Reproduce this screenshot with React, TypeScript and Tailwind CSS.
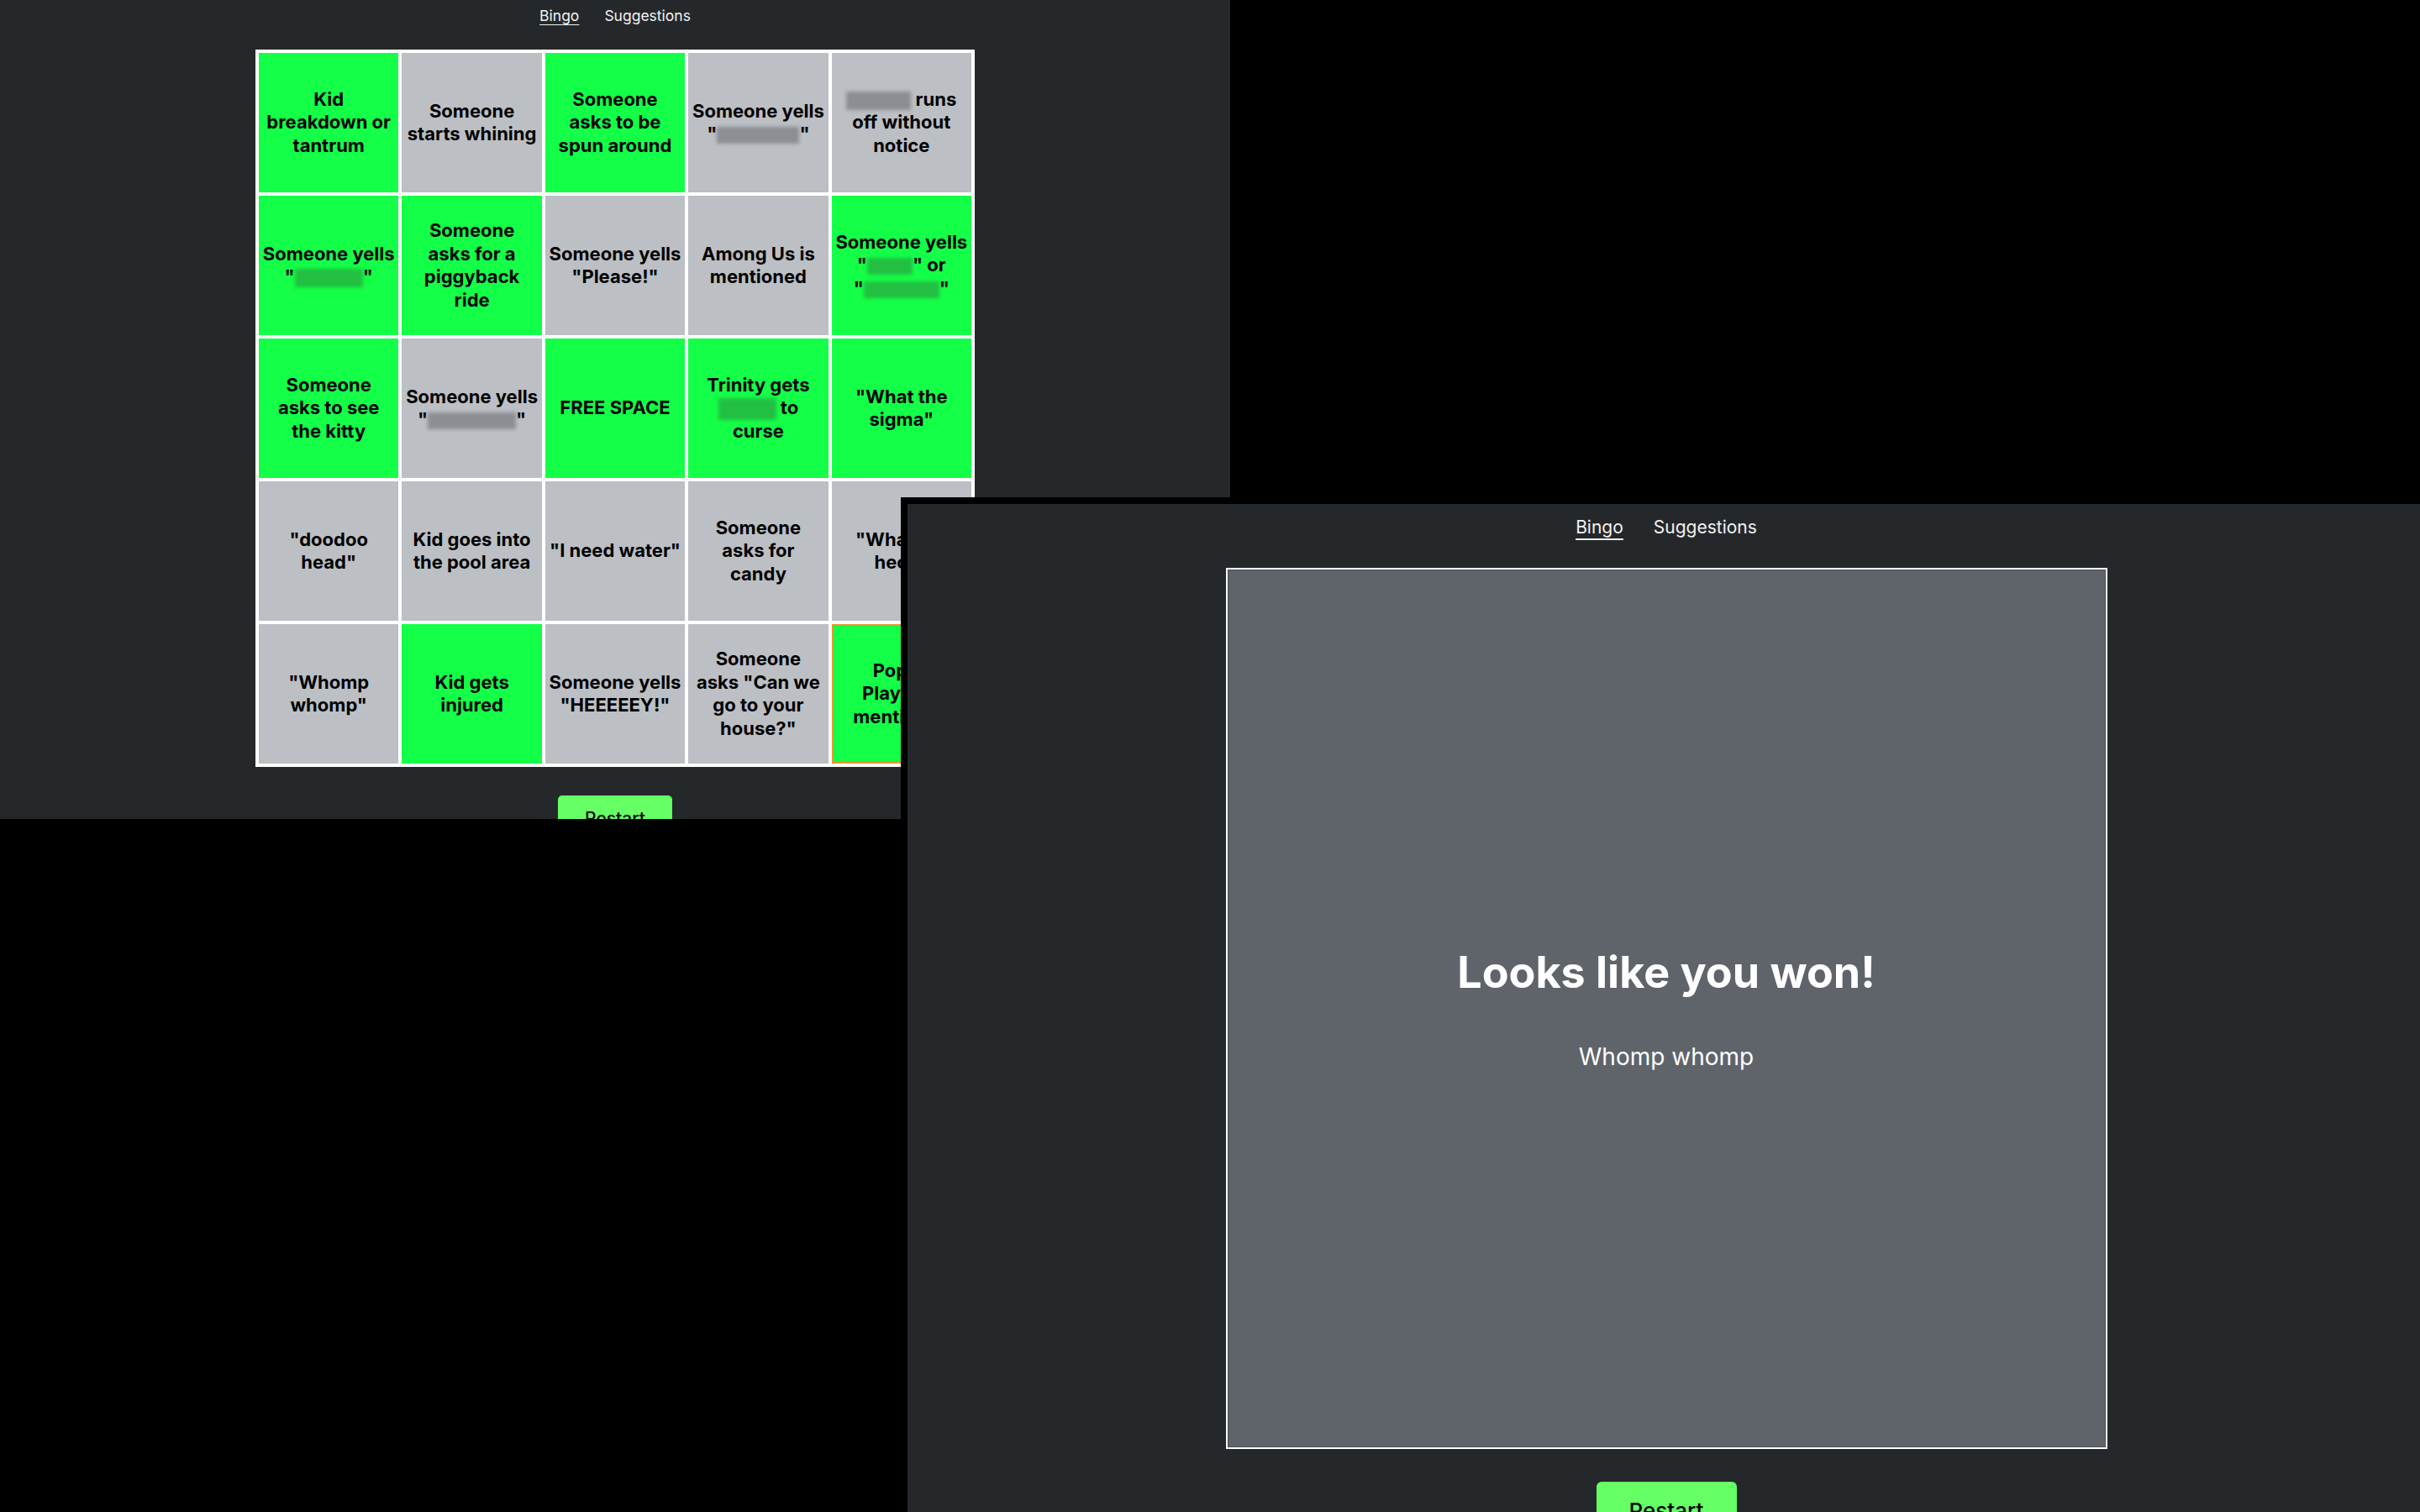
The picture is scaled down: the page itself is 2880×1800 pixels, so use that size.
import type { ReactNode } from "react";

type Cell = { on: boolean; lines: ReactNode[]; ring?: boolean };

function Blur({ className, green }: { className: string; green?: boolean }) {
  return (
    <span
      className={`inline-block align-middle blur-[2px] ${green ? "bg-[#22bf42]" : "bg-[#8c8e92]"} ${className}`}
    />
  );
}

const rows: Cell[][] = [
  [
    { on: true, lines: ["Kid", "breakdown or", "tantrum"] },
    { on: false, lines: ["Someone", "starts whining"] },
    { on: true, lines: ["Someone", "asks to be", "spun around"] },
    {
      on: false,
      lines: ["Someone yells", <>"<Blur className="w-[98px] h-[20px]" />"</>],
    },
    {
      on: false,
      lines: [<><Blur className="w-[77px] h-[22px]" /> runs</>, "off without", "notice"],
    },
  ],
  [
    {
      on: true,
      lines: ["Someone yells", <>"<Blur green className="w-[81px] h-[22px]" />"</>],
    },
    { on: true, lines: ["Someone", "asks for a", "piggyback", "ride"] },
    { on: false, lines: ["Someone yells", '"Please!"'] },
    { on: false, lines: ["Among Us is", "mentioned"] },
    {
      on: true,
      lines: [
        "Someone yells",
        <>"<Blur green className="w-[54px] h-[20px]" />" or</>,
        <>"<Blur green className="w-[90px] h-[20px]" />"</>,
      ],
    },
  ],
  [
    { on: true, lines: ["Someone", "asks to see", "the kitty"] },
    {
      on: false,
      lines: ["Someone yells", <>"<Blur className="w-[105px] h-[20px]" />"</>],
    },
    { on: true, lines: ["FREE SPACE"] },
    {
      on: true,
      lines: ["Trinity gets", <><Blur green className="w-[69px] h-[26px]" /> to</>, "curse"],
    },
    { on: true, lines: ['"What the', 'sigma"'] },
  ],
  [
    { on: false, lines: ['"doodoo', 'head"'] },
    { on: false, lines: ["Kid goes into", "the pool area"] },
    { on: false, lines: ['"I need water"'] },
    { on: false, lines: ["Someone", "asks for", "candy"] },
    { on: false, lines: ['"What the', 'heck"'] },
  ],
  [
    { on: false, lines: ['"Whomp', 'whomp"'] },
    { on: true, lines: ["Kid gets", "injured"] },
    { on: false, lines: ["Someone yells", '"HEEEEEY!"'] },
    { on: false, lines: ["Someone", 'asks "Can we', "go to your", 'house?"'] },
    { on: true, ring: true, lines: ["Poppy", "Playtime", "mentioned"] },
  ],
];

function Board() {
  return (
    <div className="mx-auto w-[856px] bg-white p-[4px] grid grid-cols-5 gap-[4px]">
      {rows.flat().map((c, i) => (
        <div
          key={i}
          className={`h-[166px] flex flex-col items-center justify-center text-center text-black font-bold text-[22px] leading-[27.5px] ${
            c.on ? "bg-[#14ff47]" : "bg-[#bcbfc4]"
          } ${c.ring ? "ring-2 ring-inset ring-[#e8972c]" : ""}`}
        >
          {c.lines.map((l, j) => (
            <div key={j} className="whitespace-nowrap">
              {l}
            </div>
          ))}
        </div>
      ))}
    </div>
  );
}

export default function App() {
  return (
    <div className="relative w-[2880px] h-[1800px] bg-black overflow-hidden font-['Inter',sans-serif]">
      {/* back window: the board */}
      <div className="absolute left-0 top-0 w-[1464px] h-[975px] bg-[#25282b] overflow-hidden">
        <nav className="h-[38px] flex items-center justify-center gap-[30px] text-[17.5px] text-[#f2f2f2]">
          <span className="underline underline-offset-[4px]">Bingo</span>
          <span>Suggestions</span>
        </nav>
        <div className="mt-[21px]">
          <Board />
        </div>
        <div className="mt-[34px] flex justify-center">
          <button className="w-[136px] h-[60px] pt-[17px] rounded-[5px] bg-[#66ff66] text-black text-[21px] leading-[21px] font-medium flex justify-center items-start">
            Restart
          </button>
        </div>
      </div>

      {/* front window: win screen */}
      <div className="absolute left-[1072px] top-[592px] w-[1814px] h-[1208px] border-8 border-r-0 border-b-0 border-black bg-[#25282b] overflow-hidden">
        <nav className="h-[56px] flex items-center justify-center gap-[36px] text-[21px] text-[#f2f2f2]">
          <span className="underline decoration-2 underline-offset-[6px]">Bingo</span>
          <span>Suggestions</span>
        </nav>
        <div className="mt-[20px] mx-auto w-[1049px] h-[1049px] border-2 border-white bg-[#5f646b] shadow-[inset_0_0_0_1px_#4b5056] flex flex-col items-center justify-center text-white">
          <h1 className="mt-[3px] text-[52px] leading-none font-bold">Looks like you won!</h1>
          <p className="mt-[60px] text-[28px] leading-none">Whomp whomp</p>
        </div>
        <div className="mt-[39px] flex justify-center">
          <button className="w-[167px] h-[70px] pt-[22px] rounded-[6px] bg-[#66ff66] text-black text-[26px] leading-[26px] font-medium flex justify-center items-start">
            Restart
          </button>
        </div>
      </div>
    </div>
  );
}
